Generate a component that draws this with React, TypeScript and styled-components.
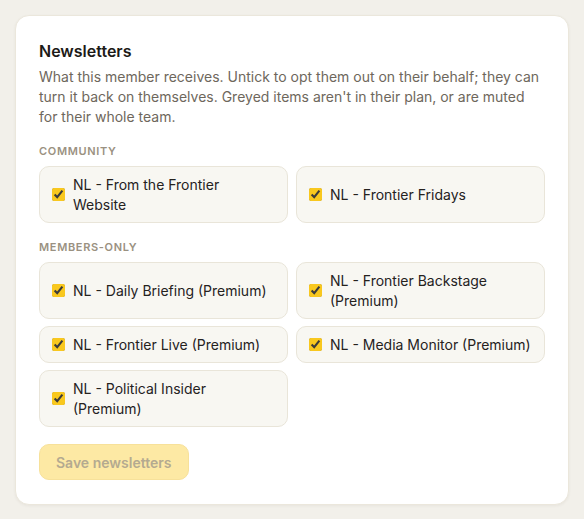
import styled, { createGlobalStyle } from "styled-components";

const GlobalStyle = createGlobalStyle`
  html, body {
    margin: 0;
    padding: 0;
    background: #f2f0ea;
    font-family: Inter, "Noto Sans", sans-serif;
  }
`;

const Page = styled.div`
  padding: 15px;
  min-height: 519px;
  box-sizing: border-box;
`;

const Card = styled.section`
  width: 554px;
  box-sizing: border-box;
  background: #ffffff;
  border: 1px solid #ebe7dc;
  border-radius: 14px;
  padding: 23px 23px 24px;
  box-shadow: 0 1px 3px rgba(60, 50, 30, 0.06);
`;

const Title = styled.h2`
  margin: 0;
  font-size: 16px;
  line-height: 24px;
  font-weight: 600;
  color: #1c1a17;
`;

const Description = styled.p`
  margin: 4px 0 0;
  font-size: 14px;
  line-height: 20px;
  color: #6e675c;
`;

const SectionLabel = styled.h3`
  margin: 17px 0 8px;
  font-size: 11px;
  line-height: 14px;
  font-weight: 600;
  letter-spacing: 0.06em;
  text-transform: uppercase;
  color: #9a9181;
`;

const Grid = styled.div`
  display: grid;
  grid-template-columns: 1fr 1fr;
  column-gap: 8px;
  row-gap: 7px;
`;

const Item = styled.label`
  display: flex;
  align-items: center;
  gap: 8px;
  padding: 7.5px 12px;
  background: #f8f7f2;
  border: 1px solid #e9e5d9;
  border-radius: 10px;
  font-size: 14px;
  line-height: 20px;
  color: #25221e;
  cursor: pointer;
`;

const Check = styled.input`
  flex: none;
  width: 13px;
  height: 13px;
  margin: 0;
  accent-color: #f9c81e;
`;

const SaveButton = styled.button`
  margin-top: 17px;
  height: 36px;
  padding: 0 16px;
  border-radius: 10px;
  border: 1px solid #f7e19a;
  background: #fde9a4;
  color: #b4aa90;
  font-family: Inter, "Noto Sans", sans-serif;
  font-size: 14px;
  font-weight: 600;
  cursor: default;
`;

const community = ["NL - From the Frontier Website", "NL - Frontier Fridays"];

const membersOnly = [
  "NL - Daily Briefing (Premium)",
  "NL - Frontier Backstage (Premium)",
  "NL - Frontier Live (Premium)",
  "NL - Media Monitor (Premium)",
  "NL - Political Insider (Premium)",
];

function NewsletterItem({ name }: { name: string }) {
  return (
    <Item>
      <Check type="checkbox" defaultChecked />
      <span>{name}</span>
    </Item>
  );
}

export default function App() {
  return (
    <Page>
      <GlobalStyle />
      <Card>
        <Title>Newsletters</Title>
        <Description>
          What this member receives. Untick to opt them out on their behalf; they can turn it back on
          themselves. Greyed items aren't in their plan, or are muted for their whole team.
        </Description>
        <SectionLabel>Community</SectionLabel>
        <Grid>
          {community.map((n) => (
            <NewsletterItem key={n} name={n} />
          ))}
        </Grid>
        <SectionLabel>Members-only</SectionLabel>
        <Grid>
          {membersOnly.map((n) => (
            <NewsletterItem key={n} name={n} />
          ))}
        </Grid>
        <SaveButton type="button" disabled>
          Save newsletters
        </SaveButton>
      </Card>
    </Page>
  );
}
